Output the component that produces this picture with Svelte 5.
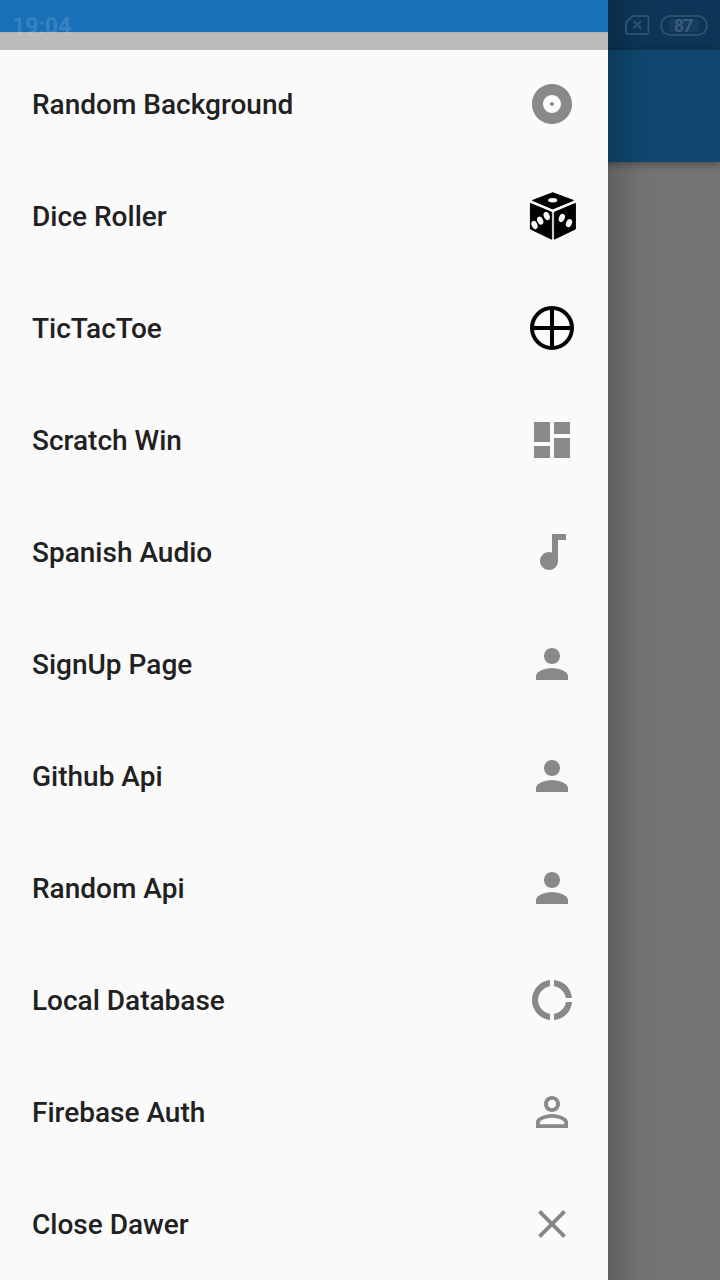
<script>
  const items = [
    ['Random Background', 'album'],
    ['Dice Roller', 'dice'],
    ['TicTacToe', 'cross'],
    ['Scratch Win', 'dashboard'],
    ['Spanish Audio', 'note'],
    ['SignUp Page', 'person'],
    ['Github Api', 'person'],
    ['Random Api', 'person'],
    ['Local Database', 'donut'],
    ['Firebase Auth', 'personOutline'],
    ['Close Dawer', 'close'],
  ];
  const paths = {
    album: 'M12 2C6.48 2 2 6.48 2 12s4.48 10 10 10 10-4.48 10-10S17.52 2 12 2zm0 14.5c-2.49 0-4.5-2.01-4.5-4.5S9.51 7.5 12 7.5s4.5 2.01 4.5 4.5-2.01 4.5-4.5 4.5zm0-5.5c-.55 0-1 .45-1 1s.45 1 1 1 1-.45 1-1-.45-1-1-1z',
    dashboard: 'M3 13h8V3H3v10zm0 8h8v-6H3v6zm10 0h8V11h-8v10zm0-18v6h8V3h-8z',
    note: 'M12 3v9.28c-.47-.17-.97-.28-1.5-.28C8.01 12 6 14.01 6 16.5S8.01 21 10.5 21c2.31 0 4.2-1.75 4.45-4H15V6h4V3h-7z',
    person: 'M12 12c2.21 0 4-1.79 4-4s-1.79-4-4-4-4 1.79-4 4 1.79 4 4 4zm0 2c-2.67 0-8 1.34-8 4v2h16v-2c0-2.66-5.33-4-8-4z',
    donut: 'M11 5.08V2c-5 .5-9 4.81-9 10s4 9.5 9 10v-3.08c-3-.48-6-3.4-6-6.92s3-6.44 6-6.92zM18.97 11H22c-.47-5-4-8.53-9-9v3.08C16 5.51 18.54 8 18.97 11zM13 18.92V22c5-.47 8.53-4 9-9h-3.03c-.43 3-2.97 5.49-5.97 5.92z',
    personOutline: 'M12 5.9c1.16 0 2.1.94 2.1 2.1s-.94 2.1-2.1 2.1S9.9 9.16 9.9 8s.94-2.1 2.1-2.1m0 9c2.97 0 6.1 1.46 6.1 2.1v1.1H5.9V17c0-.64 3.13-2.1 6.1-2.1M12 4C9.79 4 8 5.79 8 8s1.79 4 4 4 4-1.79 4-4-1.79-4-4-4zm0 9c-2.67 0-8 1.34-8 4v3h16v-3c0-2.66-5.33-4-8-4z',
    close: 'M19 6.41L17.59 5 12 10.59 6.41 5 5 6.41 10.59 12 5 17.59 6.41 19 12 13.41 17.59 19 19 17.59 13.41 12z',
  };
</script>

<div class="screen">
  <div class="page">
    <div class="statusbar"></div>
    <div class="appbar"></div>
    <div class="body"></div>
  </div>
  <nav class="drawer">
    <div class="header"></div>
    <div class="strip"></div>
    <ul>
      {#each items as [label, icon]}
        <li>
          <span>{label}</span>
          {#if icon === 'dice'}
            <svg viewBox="0 0 48 48">
              <g fill="#000" stroke="#000" stroke-width="1" stroke-linejoin="round">
                <path d="M4.5 8.4 24.7.7 45.4 8.4 24.7 16.9z" />
                <path d="M2.4 11.4 23.7 20.3V47.2L2.4 37z" />
                <path d="M26.3 20.3 47.4 11.4V37L26.3 47.2z" />
              </g>
              <g fill="#fafafa">
                <ellipse cx="24.7" cy="8.2" rx="4.5" ry="2.2" />
                <ellipse cx="6.5" cy="33" rx="2.9" ry="4.2" transform="rotate(-22 6.5 33)" />
                <ellipse cx="12.2" cy="28.7" rx="2.9" ry="4.2" transform="rotate(-22 12.2 28.7)" />
                <ellipse cx="18.7" cy="24" rx="2.9" ry="4.2" transform="rotate(-22 18.7 24)" />
                <ellipse cx="33.8" cy="26" rx="2.9" ry="4.2" transform="rotate(22 33.8 26)" />
                <ellipse cx="41" cy="31.2" rx="2.9" ry="4.2" transform="rotate(22 41 31.2)" />
              </g>
            </svg>
          {:else if icon === 'cross'}
            <svg viewBox="0 0 48 48" fill="none" stroke="#000" stroke-width="4">
              <circle cx="24" cy="24" r="20" />
              <path d="M24 4v40M4 24h40" />
            </svg>
          {:else}
            <svg viewBox="0 0 24 24"><path fill="#898989" d={paths[icon]} /></svg>
          {/if}
        </li>
      {/each}
    </ul>
  </nav>
  <div class="status">
    <span class="time">19:04</span>
    <div class="indicators">
      <svg class="sim" viewBox="0 0 26 20" fill="none" stroke-width="2">
        <path d="M7.5 1H21.500q2 0 2 2v14q0 2-2 2H3q-2 0-2-2V7.500z" stroke-linejoin="round" />
        <path d="m8.500 6 7.500 7.500M16 6 8.500 13.500" stroke-width="2.200" />
      </svg>
      <span class="battery"><b>87</b></span>
    </div>
  </div>
</div>

<style>
  :global(body) { margin: 0; }
  .screen {
    position: relative;
    width: 720px;
    height: 1280px;
    overflow: hidden;
    background: #737373;
    font-family: Roboto, sans-serif;
  }
  .page { height: 1280px; display: flex; flex-direction: column; }
  .statusbar { height: 50px; background: #0c3557; }
  .appbar {
    height: 112px;
    background: #10466f;
    box-shadow: 0 2px 8px rgba(0, 0, 0, .36);
    z-index: 1;
  }
  .body { flex: 1; background: #737373; }
  .drawer {
    position: absolute;
    z-index: 2;
    inset: 0 auto 0 0;
    width: 608px;
    background: #fafafa;
  }
  .drawer::after {
    content: '';
    position: absolute;
    inset: 0 -44px 0 auto;
    width: 44px;
    background: linear-gradient(90deg, rgba(0, 0, 0, .17), rgba(0, 0, 0, .08) 40%, rgba(0, 0, 0, .02) 75%, transparent);
  }
  .header { height: 32px; background: #1a70b8; }
  .strip { height: 18px; background: #bbb; box-shadow: inset 0 1px #b1b1b1; }
  ul { list-style: none; margin: -2px 0 0; padding: 0; }
  li {
    height: 112px;
    box-sizing: border-box;
    padding: 0 32px;
    display: flex;
    align-items: center;
    justify-content: space-between;
    font-size: 28px;
    font-weight: 500;
    line-height: 32px;
    color: #212121;
  }
  li span { padding-top: 2px; }
  li svg { width: 48px; height: 48px; }
  .status {
    position: absolute;
    z-index: 3;
    inset: 0 0 auto 0;
    height: 50px;
    box-sizing: border-box;
    padding: 0 12px;
    display: flex;
    align-items: center;
    justify-content: space-between;
  }
  .time {
    font-size: 23px;
    line-height: 28px;
    font-weight: 700;
    color: rgba(255, 255, 255, .15);
    padding-top: 4px;
  }
  .indicators { display: flex; align-items: center; gap: 9px; }
  .sim { width: 26px; height: 20px; stroke: #2d506e; }
  .battery {
    width: 48px;
    height: 21px;
    box-sizing: border-box;
    border: 2px solid #2d506e;
    border-radius: 11px;
    padding: 2px 7px;
    display: flex;
  }
  .battery b {
    flex: 1;
    border-radius: 3px;
    background: #163d5e;
    color: #3b5c78;
    font-size: 18px;
    letter-spacing: -1px;
    line-height: 13px;
    padding-right: 2px;
    text-align: center;
  }
</style>
